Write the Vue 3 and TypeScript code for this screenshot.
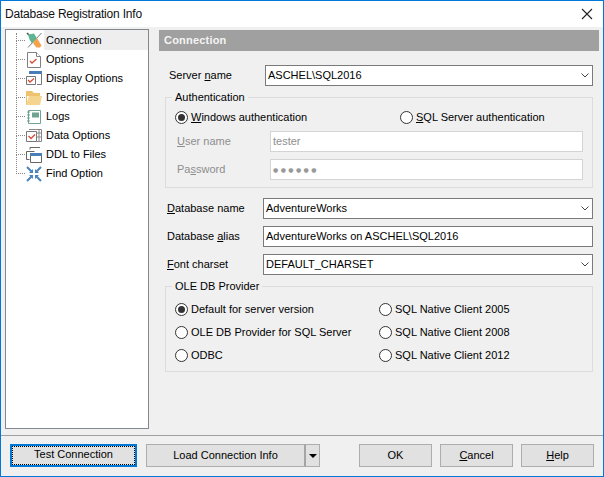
<script setup lang="ts">
const nodes = [
  { id: 'conn', label: 'Connection' },
  { id: 'opts', label: 'Options' },
  { id: 'disp', label: 'Display Options' },
  { id: 'dirs', label: 'Directories' },
  { id: 'logs', label: 'Logs' },
  { id: 'data', label: 'Data Options' },
  { id: 'ddl', label: 'DDL to Files' },
  { id: 'find', label: 'Find Option' },
]
const providersA = [
  { label: 'Default for server version', on: true },
  { label: 'OLE DB Provider for SQL Server', on: false },
  { label: 'ODBC', on: false },
]
const providersB = ['SQL Native Client 2005', 'SQL Native Client 2008', 'SQL Native Client 2012']
</script>

<template>
  <div class="window">
    <header class="titlebar">
      <span class="title">Database Registration Info</span>
      <svg class="close" width="12" height="12" viewBox="0 0 12 12"><path d="M1 1l10 10M11 1L1 11" stroke="#222" stroke-width="1.1" fill="none" /></svg>
    </header>

    <div class="body">
      <nav class="tree">
        <div v-for="(n, i) in nodes" :key="n.id" class="node" :class="{ first: i === 0 }">
          <span class="glyph">
            <svg width="16" height="16" viewBox="0 0 16 16">
              <g v-if="n.id === 'conn'">
                <path d="M15.5 1L2 15.5" stroke="#777" stroke-width="1" fill="none" />
                <path d="M1 1l2 2" stroke="#444" stroke-width="1.4" fill="none" />
                <path d="M2 2.5l6-1 3 5-5 5-2.5-4z" fill="#5cb593" />
                <path d="M7.500 9.500l3.500-3.500 2 3.500 2.500 4-1.500 2h-3.500l-3-3.500z" fill="#f5a24f" />
              </g>
              <g v-else-if="n.id === 'opts'">
                <path d="M1.500.5h9l4 4v11h-13z" fill="#fff" stroke="#808080" />
                <path d="M10.500.5v4h4" fill="#fff" stroke="#808080" />
                <path d="M4 9l2 2 4.500-4" stroke="#d8503a" stroke-width="1.4" fill="none" />
              </g>
              <g v-else-if="n.id === 'disp'">
                <path d="M3 .5h12.500v13H11" fill="#fff" stroke="#777" />
                <path d="M3 0h13v3H3z" fill="#4a7db5" />
                <path d="M.5 5.500h9v8h-9z" fill="#fff" stroke="#777" />
                <path d="M2 9l2 2 4-3.500" stroke="#d8503a" stroke-width="1.400" fill="none" />
              </g>
              <g v-else-if="n.id === 'dirs'">
                <path d="M0 1h6l2 2h6v3H0z" fill="#efc26f" />
                <path d="M0 1h1v14H0z" fill="#efc26f" />
                <path d="M3 6h13l-2 9H0z" fill="#f5d48f" />
              </g>
              <g v-else-if="n.id === 'logs'">
                <path d="M2.500 1.500h12v13h-12z" fill="#fff" stroke="#6ea391" />
                <path d="M1 3h3M1 6h3M1 9h3M1 12h3" stroke="#6ea391" stroke-width="1" />
                <path d="M6 3.500h7v5H6z" fill="#6ea391" />
              </g>
              <g v-else-if="n.id === 'data'">
                <path d="M.5 3.500h10v10H.5z" fill="#fff" stroke="#777" />
                <path d="M10 1.500h5.500v12H10M13 1v13M10 5h6M10 9h6M3 1.500h7" stroke="#888" fill="none" />
                <path d="M2.500 8l2.500 2.500 4-4" stroke="#d8503a" stroke-width="1.400" fill="none" />
              </g>
              <g v-else-if="n.id === 'ddl'">
                <path d="M4 .5h10M4 .5v2M.5 4.500h8M.5 4.500v8h3" stroke="#666" fill="none" />
                <path d="M4.500 6.500h11v9h-11z" fill="#fff" stroke="#666" />
                <path d="M4 6h12v3H4z" fill="#4a7db5" />
              </g>
              <g v-else>
                <path d="M1 1l5 5M15 1l-5 5M1 15l5-5M15 15l-5-5" stroke="#4a85bd" stroke-width="2" fill="none" />
                <path d="M7 3v4H3zM9 3v4h4zM7 13V9H3zM9 13V9h4z" fill="#4a85bd" />
              </g>
            </svg>
          </span>
          <span class="node-label">{{ n.label }}</span>
        </div>
      </nav>

      <main class="panel">
        <h1 class="heading">Connection</h1>

        <div class="row server">
          <label class="lbl server-lbl">Server <u>n</u>ame</label>
          <div class="field combo dark"><span>ASCHEL\SQL2016</span>
            <svg class="chev" width="8" height="5" viewBox="0 0 8 5"><path d="M.5.5L4 4l3.500-3.500" stroke="#444" fill="none" /></svg>
          </div>
        </div>

        <fieldset class="group auth">
          <legend>Authentication</legend>
          <div class="auth-radios">
            <div class="radio"><span class="dot on"></span><span class="rtext"><u>W</u>indows authentication</span></div>
            <div class="radio"><span class="dot"></span><span class="rtext"><u>S</u>QL Server authentication</span></div>
          </div>
          <div class="row cred">
            <label class="lbl disabled cred-lbl"><u>U</u>ser name</label>
            <div class="field light"><span>tester</span></div>
          </div>
          <div class="row cred">
            <label class="lbl disabled cred-lbl">Pa<u>s</u>sword</label>
            <div class="field light"><span class="secret">●●●●●●</span></div>
          </div>
        </fieldset>

        <div class="db-rows">
          <div class="row">
            <label class="lbl db-lbl"><u>D</u>atabase name</label>
            <div class="field combo dark"><span>AdventureWorks</span>
              <svg class="chev" width="8" height="5" viewBox="0 0 8 5"><path d="M.5.5L4 4l3.500-3.500" stroke="#444" fill="none" /></svg>
            </div>
          </div>
          <div class="row">
            <label class="lbl db-lbl">Database <u>a</u>lias</label>
            <div class="field dark"><span>AdventureWorks on ASCHEL\SQL2016</span></div>
          </div>
          <div class="row">
            <label class="lbl db-lbl"><u>F</u>ont charset</label>
            <div class="field combo dark"><span>DEFAULT_CHARSET</span>
              <svg class="chev" width="8" height="5" viewBox="0 0 8 5"><path d="M.5.5L4 4l3.500-3.500" stroke="#444" fill="none" /></svg>
            </div>
          </div>
        </div>

        <fieldset class="group ole">
          <legend>OLE DB Provider</legend>
          <div class="ole-grid">
            <div class="ole-col">
              <div v-for="p in providersA" :key="p.label" class="radio">
                <span class="dot" :class="{ on: p.on }"></span><span class="rtext">{{ p.label }}</span>
              </div>
            </div>
            <div class="ole-col">
              <div v-for="p in providersB" :key="p" class="radio">
                <span class="dot"></span><span class="rtext">{{ p }}</span>
              </div>
            </div>
          </div>
        </fieldset>
      </main>
    </div>

    <footer class="footer">
      <button class="btn test"><span class="focus">Test Connection</span></button>
      <div class="split">
        <button class="btn load">Load Connection Info</button>
        <button class="btn arrow"><i></i></button>
      </div>
      <div class="spacer"></div>
      <div class="actions">
        <button class="btn act">OK</button>
        <button class="btn act"><u>C</u>ancel</button>
        <button class="btn act"><u>H</u>elp</button>
      </div>
    </footer>
  </div>
</template>

<style>
html, body { margin: 0; padding: 0; }
</style>

<style scoped>
.window {
  width: 604px;
  height: 477px;
  box-sizing: border-box;
  border: 1px solid #0078d7;
  display: flex;
  flex-direction: column;
  background: #f0f0f0;
  font-family: "Liberation Sans", Arial, sans-serif;
  font-size: 11px;
  color: #000;
  overflow: hidden;
}
.titlebar {
  height: 26px;
  flex: none;
  background: #fff;
  display: flex;
  align-items: center;
  justify-content: space-between;
  padding: 0 10px 0 4px;
}
.title { font-size: 12px; letter-spacing: -0.2px; color: #111; }
.close { display: block; }

.body { flex: 1; display: flex; padding: 2px 4px 6px 4px; min-height: 0; }
.tree {
  width: 144px;
  box-sizing: border-box;
  height: 400px;
  flex: none;
  border: 1px solid #828790;
  background: #fff;
}
.node {
  position: relative;
  height: 19px;
  display: flex;
  align-items: center;
  padding-left: 20px;
}
.node.first { height: 20px; }
.node::before {
  content: "";
  position: absolute;
  left: 10px;
  top: -10px;
  width: 10px;
  height: 19px;
  border-left: 1px dotted #888;
  border-bottom: 1px dotted #888;
}
.node.first::before { top: 3px; height: 7px; }
.glyph { width: 16px; height: 16px; flex: none; display: block; position: relative; z-index: 1; background: #fff; }
.glyph svg { display: block; }
.node-label { margin-left: 2px; padding: 0 2px; align-self: stretch; line-height: 19px; flex: 1; }
.node.first .node-label { background: #eeeeee; line-height: 20px; }

.panel { flex: 1; padding: 1px 0 0 10px; min-width: 0; }
.heading {
  margin: 0;
  height: 21px;
  width: 440px;
  box-sizing: border-box;
  background: #a0a0a0;
  color: #f4f4f4;
  font-size: 11px;
  font-weight: bold;
  line-height: 21px;
  padding-left: 5px;
  letter-spacing: 0.2px;
}
.row { display: flex; align-items: center; }
.server { margin: 14px 6px 0 10px; }
.server-lbl { width: 96px; }
.lbl { flex: none; margin-bottom: 2px; }
.lbl.disabled { color: #8e8e8e; }
.field {
  flex: 1;
  height: 21px;
  box-sizing: border-box;
  background: #fff;
  display: flex;
  align-items: center;
  justify-content: space-between;
  padding: 0 2px 2px;
  min-width: 0;
}
.field.dark { border: 1px solid #7a7a7a; }
.field.light { border: 1px solid #d4d4d4; color: #8e8e8e; }
.chev { margin: 2px 1px 0 0; flex: none; }
.secret { font-family: "DejaVu Sans", sans-serif; font-size: 6px; letter-spacing: 2.4px; color: #999; position: relative; top: 1px; }

.group {
  margin: 5px 0 0 6px;
  width: 428px;
  box-sizing: border-box;
  border: 1px solid #dcdcdc;
  padding: 0;
  min-width: 0;
}
.group legend {
  margin-left: 6px;
  padding: 0 3px;
  line-height: 13px;
  font-size: 11px;
}
.auth { height: 97px; }
.auth-radios { display: flex; margin: 7px 0 0 9px; }
.auth-radios .radio:first-child { width: 225px; flex: none; }
.radio { display: flex; align-items: center; gap: 3px; height: 13px; }
.rtext { margin-bottom: 2px; }
.dot {
  width: 13px;
  height: 13px;
  box-sizing: border-box;
  border: 1px solid #333;
  border-radius: 50%;
  background: #fff;
  flex: none;
  position: relative;
}
.dot.on::after {
  content: "";
  position: absolute;
  inset: 2px;
  border-radius: 50%;
  background: #333;
}
.cred { margin: 7px 9px 0 11px; }
.cred-lbl { width: 93px; }
.db-rows { margin: 10px 6px 0 8px; display: flex; flex-direction: column; gap: 7px; }
.db-lbl { width: 96px; }
.ole { height: 92px; }
.ole-grid { display: flex; margin: 10px 0 0 9px; }
.ole-col { display: flex; flex-direction: column; gap: 10px; }
.ole-col:first-child { width: 204px; }

.footer {
  flex: none;
  height: 41px;
  box-sizing: border-box;
  border-top: 1px solid #a0a0a0;
  display: flex;
  align-items: flex-start;
  padding: 8px 9px 0 9px;
  gap: 9px;
}
.spacer { flex: 1; }
.actions { display: flex; gap: 8px; }
.btn {
  height: 23px;
  box-sizing: border-box;
  border: 1px solid #adadad;
  background: #e1e1e1;
  font: inherit;
  color: #000;
  padding: 0 0 2px;
  margin: 0;
}
.test { width: 127px; border: 2px solid #0078d7; padding: 0; display: flex; }
.focus {
  flex: 1;
  border: 1px dotted #000;
  line-height: 15px;
  padding-bottom: 2px;
  text-align: center;
}
.split { display: flex; }
.load { width: 160px; border-right-width: 2px; border-right-color: #a5a5a5; }
.arrow { width: 14px; border-left: 0; padding: 0; display: flex; align-items: center; justify-content: center; }
.arrow i {
  width: 0;
  height: 0;
  border-left: 4px solid transparent;
  border-right: 4px solid transparent;
  border-top: 4px solid #000;
}
.act { width: 73px; }
</style>
